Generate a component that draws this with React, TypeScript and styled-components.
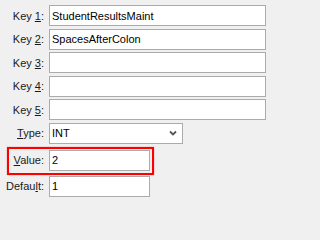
import { createGlobalStyle } from "styled-components";
import styled from "styled-components";

const GlobalStyle = createGlobalStyle`
  html, body {
    margin: 0;
    padding: 0;
    background: #f0f0f0;
  }
  body {
    font-family: "Liberation Sans", Arial, sans-serif;
    font-size: 11px;
    color: #000000;
  }
`;

type Field = {
  label: string;
  key: number;
  value: string;
  width: number;
};

const keyFields: Field[] = [
  { label: "Key 1:", key: 4, value: "StudentResultsMaint", width: 217 },
  { label: "Key 2:", key: 4, value: "SpacesAfterColon", width: 217 },
  { label: "Key 3:", key: 4, value: "", width: 217 },
  { label: "Key 4:", key: 4, value: "", width: 217 },
  { label: "Key 5:", key: 4, value: "", width: 217 },
];

// underline the access key character
const renderLabel = (label: string, index: number) => (
  <>
    {label.slice(0, index)}
    <Mnemonic>{label.charAt(index)}</Mnemonic>
    {label.slice(index + 1)}
  </>
);

const App = () => {
  return (
    <>
      <GlobalStyle />
      <Form>
        {keyFields.map((f) => (
          <Row key={f.label}>
            <Label>{renderLabel(f.label, f.key)}</Label>
            <TextBox $width={f.width}>{f.value}</TextBox>
          </Row>
        ))}
        <Row>
          <Label>{renderLabel("Type:", 0)}</Label>
          <Combo>
            <span>INT</span>
            <svg width="8" height="6" viewBox="0 0 8 6">
              <polyline
                points="1,1.5 4,4.5 7,1.5"
                fill="none"
                stroke="#555555"
                strokeWidth="1.8"
              />
            </svg>
          </Combo>
        </Row>
        <Row $highlight>
          <Label>{renderLabel("Value:", 0)}</Label>
          <TextBox $width={101}>2</TextBox>
        </Row>
        <Row>
          <Label>{renderLabel("Default:", 5)}</Label>
          <TextBox $width={101}>1</TextBox>
        </Row>
      </Form>
    </>
  );
};

const Form = styled.div`
  display: flex;
  flex-direction: column;
  gap: 2.5px;
  padding: 5px 5px 0 0;
`;

const Row = styled.div<{ $highlight?: boolean }>`
  position: relative;
  display: flex;
  align-items: center;
  gap: 5px;
  height: 21px;
  margin: ${(p) => (p.$highlight ? "3.5px 0 2.5px" : "0")};

  ${(p) =>
    p.$highlight &&
    `
    &::after {
      content: "";
      position: absolute;
      left: 7px;
      top: -3px;
      bottom: -4px;
      width: 143px;
      border: 2px solid #ff0000;
      box-shadow: 0 0 1px rgba(255, 0, 0, 0.6);
      pointer-events: none;
    }
  `}
`;

const Label = styled.label`
  flex: none;
  width: 44px;
  text-align: right;
  white-space: nowrap;
  color: #1a1a1a;
`;

const Mnemonic = styled.u`
  text-decoration-thickness: 1px;
  text-underline-offset: 1px;
`;

const TextBox = styled.div<{ $width: number }>`
  box-sizing: border-box;
  width: ${(p) => p.$width}px;
  height: 21px;
  padding: 0 2px;
  display: flex;
  align-items: center;
  background: #ffffff;
  border: 1px solid #ababab;
  white-space: nowrap;
  overflow: hidden;
`;

const Combo = styled.div`
  box-sizing: border-box;
  width: 134px;
  height: 21px;
  padding: 0 5px 0 2px;
  display: flex;
  align-items: center;
  justify-content: space-between;
  background: #ffffff;
  border: 1px solid #ababab;
`;

export default App;
